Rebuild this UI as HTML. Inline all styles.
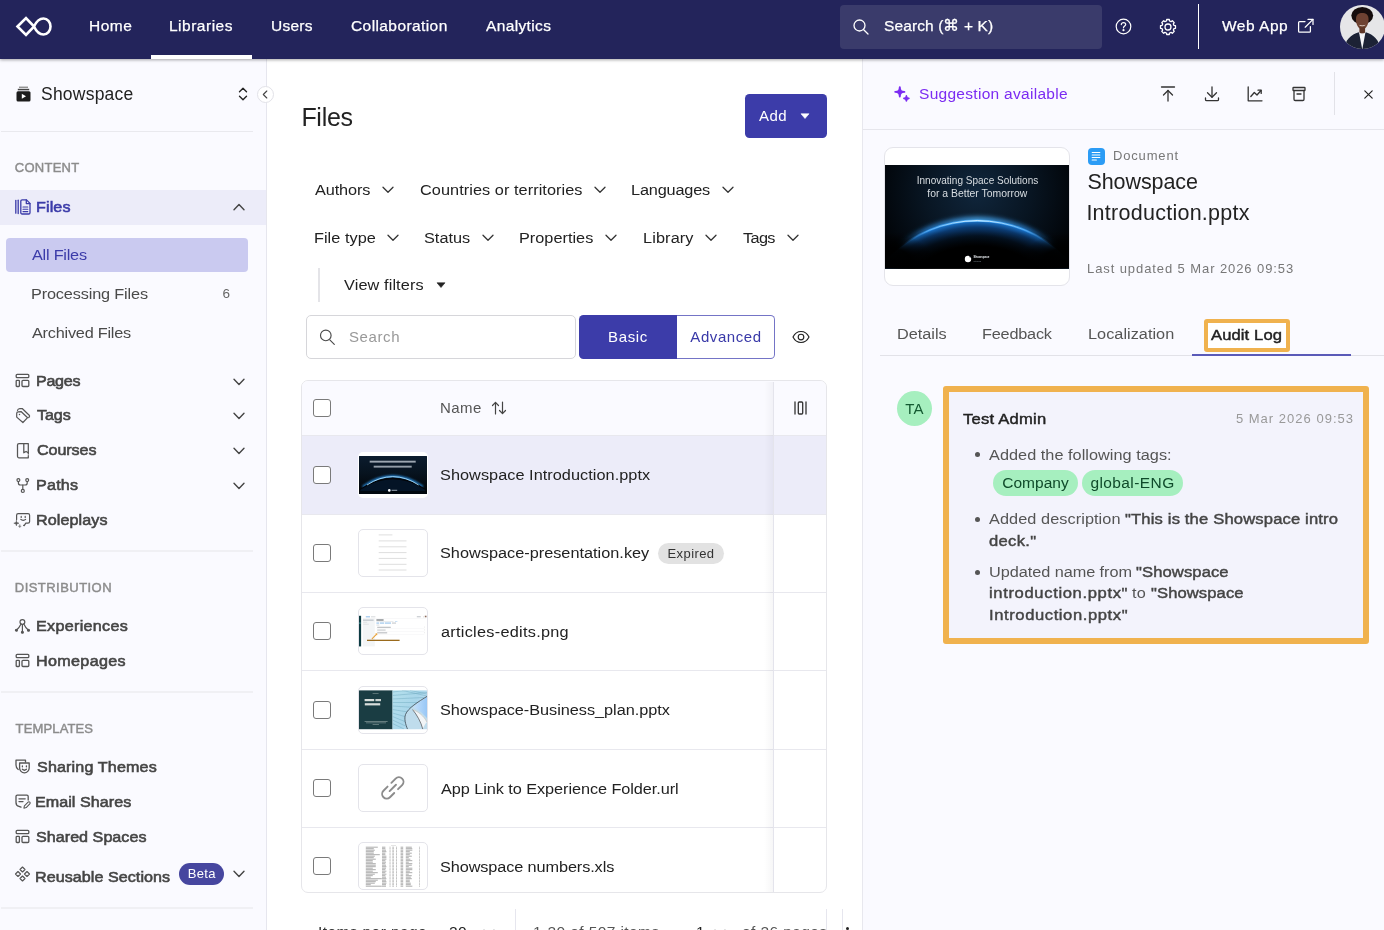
<!DOCTYPE html>
<html lang="en"><head><meta charset="utf-8"><title>Files</title>
<style>
*{box-sizing:border-box;margin:0;padding:0}
html,body{width:1384px;height:930px;overflow:hidden;background:#fff}
body{font-family:"Liberation Sans",sans-serif;color:#222;position:relative;font-size:15px}
.abs{position:absolute}
.t{position:absolute;white-space:nowrap;line-height:20px}
svg{display:block;overflow:visible}
/* NAV */
#nav{position:absolute;left:0;top:0;width:1384px;height:59px;background:#23245b;box-shadow:0 1px 3px rgba(0,0,0,.35);z-index:10}
#nav .ni{color:#fff;font-size:15.5px;font-weight:400;top:16px;letter-spacing:.5px;-webkit-text-stroke:.25px #fff}
/* SIDEBAR */
#side{position:absolute;left:0;top:59px;width:267px;height:871px;background:#fafaff;border-right:1px solid #e6e6ee}
.hr{position:absolute;left:1px;width:252px;height:2px;background:#f0f0f4}
.sec{position:absolute;left:14px;font-size:13px;letter-spacing:.7px;color:#8c8c8c;line-height:16px;-webkit-text-stroke:.45px #8c8c8c}
.mi{position:absolute;left:36px;transform:scaleX(1.04);transform-origin:0 0;font-size:15.5px;font-weight:400;-webkit-text-stroke:.6px #454545;color:#454545;line-height:20px;letter-spacing:.2px;white-space:nowrap}
.sub{position:absolute;transform:scaleX(1.05);transform-origin:0 0;left:32px;font-size:15.5px;color:#4a4a4a;line-height:20px;letter-spacing:.45px;white-space:nowrap}
.ico{position:absolute;left:14px;width:17px;height:17px;fill:none;stroke:#555;stroke-width:1.3;stroke-linecap:round;stroke-linejoin:round}
.chev{position:absolute;left:233px;width:12px;height:8px;fill:none;stroke:#444;stroke-width:1.4;stroke-linecap:round;stroke-linejoin:round}
/* MAIN */
#main{position:absolute;left:267px;top:59px;width:595px;height:871px;background:#fff}
.flt{position:absolute;transform:scaleX(1.05);transform-origin:0 0;font-size:15.5px;color:#222;line-height:20px;letter-spacing:.4px;white-space:nowrap}
.fch{position:absolute;width:12px;height:8px;fill:none;stroke:#333;stroke-width:1.3;stroke-linecap:round;stroke-linejoin:round}
.cb{position:absolute;left:313px;width:18px;height:18px;border:1.5px solid #7a7a7a;border-radius:3px;background:#fff}
.thumb{position:absolute;left:358.3px;width:69.6px;height:48px;border:1px solid #e4e4ea;border-radius:5px;background:#fff;overflow:hidden}
.fn{position:absolute;transform:scaleX(1.05);transform-origin:0 0;left:441px;font-size:15.5px;color:#222;line-height:20px;letter-spacing:.45px;white-space:nowrap}
.rowline{position:absolute;left:302px;width:524px;height:1px;background:#e8e8ee}
/* PANEL */
#panel{position:absolute;left:862px;top:59px;width:522px;height:871px;background:#fafaff;border-left:1px solid #e8e8ee}
.pic{position:absolute;width:18px;height:18px;fill:none;stroke:#333;stroke-width:1.3;stroke-linecap:round;stroke-linejoin:round}
.tab{position:absolute;transform:scaleX(1.05);transform-origin:0 0;top:324px;font-size:15.5px;color:#555;line-height:20px;letter-spacing:.5px;white-space:nowrap}
.li{position:absolute;left:989px;font-size:15.5px;color:#555;line-height:21.5px;letter-spacing:.35px;white-space:nowrap}
.li b{color:#444;letter-spacing:.1px}
.lr{position:absolute;transform:scaleX(1.05);transform-origin:0 0;font-size:15.5px;color:#555;line-height:20px;white-space:nowrap}
.lb{position:absolute;transform:scaleX(1.07);transform-origin:0 0;font-size:15.5px;font-weight:400;-webkit-text-stroke:.45px #444;color:#444;line-height:20px;white-space:nowrap}
.dot{position:absolute;left:975px;width:5px;height:5px;border-radius:50%;background:#555}
.tag{position:absolute;top:469.5px;height:26px;border-radius:13px;background:#a6efbf;color:#0f4a2a;font-size:15.5px;line-height:26px;text-align:center;letter-spacing:.3px}
#root{position:absolute;left:0;top:0;width:1384px;height:930px;overflow:hidden;will-change:transform;background:#fff}
</style></head><body>
<div id="root">

<!-- ================= NAV ================= -->
<div id="nav">
  <svg class="abs" style="left:16px;top:15px" width="36" height="23" viewBox="0 0 36 23"><path d="M1.5 11.5 L10 3 L18 11.5 C21 5 25 3.5 27.5 3.5 C31.5 3.5 34.5 7 34.5 11.5 C34.5 16 31.5 19.5 27.5 19.5 C25 19.5 21 18 18 11.5 L10 20 Z" fill="none" stroke="#fff" stroke-width="2.6" stroke-linejoin="miter"/></svg>
  <div class="t ni" style="left:89.0px;letter-spacing:0.5px">Home</div>
  <div class="t ni" style="left:169.0px;letter-spacing:0.5px">Libraries</div>
  <div class="t ni" style="left:271.0px;letter-spacing:0.25px">Users</div>
  <div class="t ni" style="left:351px;letter-spacing:0.41px">Collaboration</div>
  <div class="t ni" style="left:486.0px;letter-spacing:0.37px">Analytics</div>
  <div class="abs" style="left:151px;top:55px;width:101px;height:4px;background:#fff"></div>
  <div class="abs" style="left:840px;top:5px;width:262px;height:43.6px;background:#3a3b6b;border-radius:4px"></div>
  <svg class="abs" style="left:852px;top:18px" width="18" height="18" viewBox="0 0 18 18" fill="none" stroke="#fff" stroke-width="1.3" stroke-linecap="round"><circle cx="7.5" cy="7.5" r="5.5"/><path d="M11.7 11.7 L16 16"/></svg>
  <div class="t ni" style="left:884px;letter-spacing:0.11px">Search (⌘ + K)</div>
  <svg class="abs" style="left:1115px;top:18px" width="17" height="17" viewBox="0 0 17 17" fill="none" stroke="#fff" stroke-width="1.2" stroke-linecap="round"><circle cx="8.5" cy="8.5" r="7.3"/><path d="M6.3 6.6 C6.3 5.3 7.3 4.6 8.5 4.6 C9.8 4.6 10.7 5.4 10.7 6.5 C10.7 8 8.5 8.1 8.5 9.8"/><circle cx="8.5" cy="12.2" r=".5" fill="#fff"/></svg>
  <svg class="abs" style="left:1158.6px;top:17.6px" width="18" height="18" viewBox="0 0 18 18" fill="none" stroke="#fff" stroke-width="1.3" stroke-linejoin="round"><path d="M7.41 3.01 L7.69 1.51 L10.31 1.51 L10.59 3.01 L12.11 3.64 L13.37 2.78 L15.22 4.63 L14.36 5.89 L14.99 7.41 L16.49 7.69 L16.49 10.31 L14.99 10.59 L14.36 12.11 L15.22 13.37 L13.37 15.22 L12.11 14.36 L10.59 14.99 L10.31 16.49 L7.69 16.49 L7.41 14.99 L5.89 14.36 L4.63 15.22 L2.78 13.37 L3.64 12.11 L3.01 10.59 L1.51 10.31 L1.51 7.69 L3.01 7.41 L3.64 5.89 L2.78 4.63 L4.63 2.78 L5.89 3.64 Z"/><circle cx="9" cy="9" r="3"/></svg>
  <div class="abs" style="left:1197.7px;top:4px;width:1.6px;height:45px;background:#fff"></div>
  <div class="t ni" style="left:1222.0px;letter-spacing:0.5px">Web App</div>
  <svg class="abs" style="left:1297px;top:18px" width="17" height="16" viewBox="1297 18 17 16" fill="none" stroke="#fff" stroke-width="1.25" stroke-linecap="round" stroke-linejoin="round"><path d="M1305 21.6 H1299.6 a1 1 0 0 0 -1 1 V31.2 a1 1 0 0 0 1 1 H1309.4 a1 1 0 0 0 1 -1 V26.6"/><path d="M1308 19.4 H1313 V24.4"/><path d="M1313 19.4 L1305.2 27.2"/></svg>
  <div class="abs" id="avatar" style="left:1340px;top:4.5px;width:44.5px;height:44.5px;border-radius:50%;background:#e6e6e8;overflow:hidden">
    <svg width="44.5" height="44.5" viewBox="0 0 44 44"><defs><filter id="avb"><feGaussianBlur stdDeviation=".5"/></filter></defs><g filter="url(#avb)"><ellipse cx="22" cy="10.5" rx="10.8" ry="8.6" fill="#17100e"/><path d="M15.8 14 C15.8 9.5 18.5 8 22 8 C25.5 8 28.2 9.5 28.2 14 C28.2 19.5 25.8 23.8 22 23.8 C18.2 23.8 15.8 19.5 15.8 14 Z" fill="#6e4230"/><path d="M18.4 19.6 Q22 22.6 25.6 19.6 Q22 21 18.4 19.6Z" fill="#f2e8e4"/><rect x="19.2" y="22" width="5.6" height="6" fill="#5d3626"/><path d="M4 46 C4.5 34 11 29.5 18.5 27 L22 31 L25.5 27 C33 29.5 39.5 34 40 46 Z" fill="#1a2236"/><path d="M18.8 27 L22 44 L25.2 27 L22 29.4 Z" fill="#f4f5f7"/></g></svg>
  </div>
</div>

<!-- ================= SIDEBAR ================= -->
<div id="side"></div>
<div id="sidec" class="abs" style="left:0;top:0;width:267px;height:930px">
  <!-- library switcher -->
  <svg class="abs" style="left:16px;top:85.6px" width="15" height="16" viewBox="0 0 15 16"><rect x="3" y="0.6" width="9" height="1.3" fill="#888"/><rect x="1.8" y="2.8" width="11.4" height="1.5" fill="#444"/><rect x="0.5" y="5.2" width="14" height="10.3" rx="1.5" fill="#1c1c1c"/><path d="M5.8 7.8 L10 10.3 L5.8 12.8 Z" fill="#fff"/></svg>
  <div class="t sw" style="left:41.0px;top:83px;font-size:17.5px;line-height:22px;color:#222;letter-spacing:0.22px">Showspace</div>
  <svg class="abs" style="left:238px;top:87px" width="10" height="14" viewBox="0 0 10 14" fill="none" stroke="#222" stroke-width="1.4" stroke-linecap="round" stroke-linejoin="round"><path d="M1.5 4.8 L5 1.3 L8.5 4.8"/><path d="M1.5 9.2 L5 12.7 L8.5 9.2"/></svg>
  <div class="hr" style="top:131px;height:1px;background:#e9e9ee"></div>
  <div class="sec" style="top:160px;letter-spacing:0.26px;left:14.8px">CONTENT</div>
  <!-- Files active -->
  <div class="abs" style="left:0;top:189.5px;width:266px;height:35px;background:#ececf9"></div>
  <svg class="abs" style="left:15px;top:199px" width="16" height="16" viewBox="0 0 16 16" fill="none" stroke="#3b3ba9" stroke-width="1.3" stroke-linecap="round" stroke-linejoin="round"><path d="M0.8 1.5 V14.2"/><path d="M3.2 1.2 V14.5"/><path d="M5.8 2.2 a1.3 1.3 0 0 1 1.3 -1.3 H11.5 L15 4.4 V13.7 a1.3 1.3 0 0 1 -1.3 1.3 H7.1 a1.3 1.3 0 0 1 -1.3 -1.3 Z"/><path d="M11.3 1 V4.6 H15"/><path d="M8 8 H12.8 M8 10.3 H12.8 M8 12.6 H12.8" stroke-width="1.1"/></svg>
  <div class="mi" style="top:197px;color:#3b3ba9;-webkit-text-stroke-color:#3b3ba9;letter-spacing:0.1px;left:36.0px">Files</div>
  <svg class="chev" style="top:203px" viewBox="0 0 12 8"><path d="M1 6.8 L6 1.5 L11 6.8"/></svg>
  <div class="abs" style="left:6px;top:238px;width:242px;height:34px;background:#cacaf0;border-radius:4px"></div>
  <div class="sub" style="top:245px;color:#3b3ba9;letter-spacing:-0.23px">All Files</div>
  <div class="sub" style="top:284px;letter-spacing:-0.15px;left:31.2px">Processing Files</div>
  <div class="t" style="left:222.6px;top:285px;font-size:13.5px;color:#666;line-height:18px">6</div>
  <div class="sub" style="top:323px;letter-spacing:-0.22px">Archived Files</div>

  <svg class="ico" style="top:372px" viewBox="0 0 17 17"><rect x="2.2" y="2.3" width="12.6" height="3.4" rx="1"/><rect x="2.2" y="8.3" width="3.2" height="6.2" rx=".8"/><rect x="8" y="8.3" width="6.8" height="6.2" rx="1"/></svg>
  <div class="mi" style="top:371px;letter-spacing:-0.3px;left:36.0px">Pages</div>
  <svg class="chev" style="top:378px" viewBox="0 0 12 8"><path d="M1 1.2 L6 6.5 L11 1.2"/></svg>

  <svg class="ico" style="top:406px;stroke-width:1.2" viewBox="0 0 17 17"><path d="M4.1 5.9 L7.3 5.7 L13.6 11.7 L8.9 16.5 L2.7 11.1 L2.7 7.4 Q2.7 6 4.1 5.9 Z"/><path d="M3.5 4.4 Q3.9 2.7 5.8 2.6 L8.2 2.5 L15.2 9.2 Q16 10.1 15.2 11 L14.7 11.5"/><circle cx="5.5" cy="8.6" r=".75" fill="#555" stroke="none"/></svg>
  <div class="mi" style="top:405px;letter-spacing:-0.1px;left:37.0px">Tags</div>
  <svg class="chev" style="top:412px" viewBox="0 0 12 8"><path d="M1 1.2 L6 6.5 L11 1.2"/></svg>

  <svg class="ico" style="top:441px;stroke-width:1.25" viewBox="0 0 17 17"><path d="M14.3 13 V2.6 H5 a1.5 1.5 0 0 0 -1.5 1.5 V15.3 a1.5 1.5 0 0 0 1.5 1.5 H14.3 V14.7"/><path d="M9.8 2.6 V11.8 L12.05 10.5 L14.3 11.8"/></svg>
  <div class="mi" style="top:440px;letter-spacing:-0.09px;left:37.0px">Courses</div>
  <svg class="chev" style="top:447px" viewBox="0 0 12 8"><path d="M1 1.2 L6 6.5 L11 1.2"/></svg>

  <svg class="ico" style="top:476px;stroke-width:1.2" viewBox="0 0 17 17"><circle cx="4.4" cy="4.1" r="1.45"/><circle cx="13.2" cy="4.1" r="1.45"/><circle cx="8.8" cy="14.9" r="1.5"/><path d="M4.4 5.6 V7 a2 2 0 0 0 2 2 H11.2 a2 2 0 0 0 2 -2 V5.6"/><path d="M8.8 9 V13.4"/></svg>
  <div class="mi" style="top:475px;letter-spacing:0.2px;left:36.0px">Paths</div>
  <svg class="chev" style="top:482px" viewBox="0 0 12 8"><path d="M1 1.2 L6 6.5 L11 1.2"/></svg>

  <svg class="ico" style="top:511px;stroke-width:1.2" viewBox="0 0 17 17"><path d="M2.6 8.6 V4.2 a1.6 1.6 0 0 1 1.6 -1.6 H14 a1.6 1.6 0 0 1 1.6 1.6 V10.6 a1.6 1.6 0 0 1 -1.6 1.6 H11.8 L10.2 14.6 L9.6 14.4"/><path d="M7.2 5.4 V6.4 M11.2 5.4 V6.4"/><path d="M6.8 8.4 a3 2.4 0 0 0 4.8 0"/><path d="M2.4 9.6 C2.6 11.4 3.2 12 5 12.2 C3.2 12.4 2.6 13 2.4 14.8 C2.2 13 1.6 12.4 -.2 12.2 C1.6 12 2.2 11.4 2.4 9.6 Z" fill="#555" stroke-width=".5"/><path d="M5.8 13.9 C5.9 14.9 6.2 15.2 7.2 15.3 C6.2 15.4 5.9 15.7 5.8 16.7 C5.7 15.7 5.4 15.4 4.4 15.3 C5.4 15.2 5.7 14.9 5.8 13.9 Z" fill="#555" stroke-width=".4"/></svg>
  <div class="mi" style="top:510px;letter-spacing:0.09px;left:36.0px">Roleplays</div>

  <div class="hr" style="top:550px"></div>
  <div class="sec" style="top:580px;letter-spacing:0.46px;left:14.8px">DISTRIBUTION</div>

  <svg class="ico" style="top:617px;stroke-width:1.2" viewBox="0 0 17 17"><circle cx="8.4" cy="5" r="2.4"/><path d="M7 7 C5.8 9.6 4.6 11.4 2.6 12.9"/><path d="M9.8 7 C11 9.6 12.2 11.4 14.2 12.9"/><path d="M8.4 7.5 V14.6"/><circle cx="2.4" cy="13.2" r=".95" fill="#555"/><circle cx="14.5" cy="13.2" r=".95" fill="#555"/><circle cx="8.4" cy="15.3" r=".95" fill="#555"/></svg>
  <div class="mi" style="top:616px;letter-spacing:0.3px;left:36.0px">Experiences</div>
  <svg class="ico" style="top:652px" viewBox="0 0 17 17"><rect x="2.2" y="2.3" width="12.6" height="3.4" rx="1"/><rect x="2.2" y="8.3" width="3.2" height="6.2" rx=".8"/><rect x="8" y="8.3" width="6.8" height="6.2" rx="1"/></svg>
  <div class="mi" style="top:651px;letter-spacing:0.33px;left:36.0px">Homepages</div>

  <div class="hr" style="top:691px"></div>
  <div class="sec" style="top:721px;letter-spacing:0.14px;left:15.6px">TEMPLATES</div>

  <svg class="ico" style="top:758px" viewBox="0 0 17 17"><path d="M4.2 11.5 C2.8 10.6 2 9 2 7 V2.2 H11.5 V4"/><path d="M5.6 5 H15.2 V10 a4.8 4.8 0 0 1 -9.6 0 Z"/><path d="M8.4 8 V8.8 M12.4 8 V8.8"/><path d="M8.4 11.3 a2.6 2 0 0 0 4 0"/></svg>
  <div class="mi" style="top:757px;letter-spacing:0.13px;left:37.0px">Sharing Themes</div>
  <svg class="ico" style="top:793px" viewBox="0 0 17 17"><path d="M14.2 7 V3.5 a1.3 1.3 0 0 0 -1.3 -1.3 H3.3 a1.3 1.3 0 0 0 -1.3 1.3 V9.5 a4 4 0 0 0 3 3.9 L7 14.2"/><path d="M5 5.8 H11.2 M5 8.6 H9"/><path d="M9.9 15.2 L10.4 12.8 L14.1 9.1 a1.15 1.15 0 0 1 1.7 1.7 L12.2 14.6 Z" fill="none" stroke-width="1.05"/></svg>
  <div class="mi" style="top:792px;letter-spacing:0.03px;left:35.0px">Email Shares</div>
  <svg class="ico" style="top:828px" viewBox="0 0 17 17"><rect x="2.2" y="2.3" width="12.6" height="3.4" rx="1"/><rect x="2.2" y="8.3" width="3.2" height="6.2" rx=".8"/><rect x="8" y="8.3" width="6.8" height="6.2" rx="1"/></svg>
  <div class="mi" style="top:827px;letter-spacing:0.02px;left:36.0px">Shared Spaces</div>
  <svg class="ico" style="top:866px;stroke-width:1.15" viewBox="0 0 17 17"><path d="M8.5 1 L11 3.5 L8.5 6 L6 3.5 Z"/><path d="M8.5 10 L11 12.5 L8.5 15 L6 12.5 Z"/><path d="M4 5.5 L6.5 8 L4 10.5 L1.5 8 Z"/><path d="M13 5.5 L15.5 8 L13 10.5 L10.5 8 Z"/></svg>
  <div class="mi" style="top:867px;letter-spacing:0.04px;left:35.0px">Reusable Sections</div>
  <div class="abs" style="left:179px;top:863px;width:45.4px;height:22px;border-radius:11px;background:#46469f;color:#fff;font-size:13px;line-height:22px;text-align:center;letter-spacing:.3px">Beta</div>
  <svg class="chev" style="top:870px" viewBox="0 0 12 8"><path d="M1 1.2 L6 6.5 L11 1.2"/></svg>
  <div class="hr" style="top:907px"></div>
</div>
<!-- collapse handle -->
<div class="abs" style="left:257px;top:86px;width:17px;height:17px;border-radius:50%;background:#fff;border:1px solid #e2e2e8;z-index:5"></div>
<svg class="abs" style="left:262px;top:90px;z-index:6" width="6" height="9" viewBox="0 0 6 9" fill="none" stroke="#444" stroke-width="1.1" stroke-linecap="round" stroke-linejoin="round"><path d="M4.8 1 L1.3 4.5 L4.8 8"/></svg>

<!-- ================= MAIN ================= -->
<div id="main"></div>
<div id="mainc" class="abs" style="left:0;top:0;width:862px;height:930px;overflow:hidden">
  <div class="t ttl" style="left:301.4px;top:101px;font-size:25px;line-height:32px;color:#222;letter-spacing:-0.29px">Files</div>
  <div class="abs" style="left:745px;top:94.4px;width:82px;height:43.2px;background:#3c3ca9;border-radius:4.5px"></div>
  <div class="t add" style="left:759px;top:106px;color:#fff;font-size:15px;letter-spacing:0.5px">Add</div>
  <svg class="abs" style="left:800px;top:113px" width="10" height="6" viewBox="0 0 10 6"><path d="M1 .8 H9 L5 5.5 Z" fill="#fff" stroke="#fff" stroke-width=".6" stroke-linejoin="round"/></svg>
  <div class="flt" style="left:315px;top:180px;letter-spacing:-0.1px">Authors</div><svg class="fch" style="left:382px;top:186px" viewBox="0 0 12 8"><path d="M1 1.3 L6 6.3 L11 1.3"/></svg>
  <div class="flt" style="left:420px;top:180px;letter-spacing:0.06px">Countries or territories</div><svg class="fch" style="left:594px;top:186px" viewBox="0 0 12 8"><path d="M1 1.3 L6 6.3 L11 1.3"/></svg>
  <div class="flt" style="left:631.3px;top:180px;letter-spacing:-0.16px">Languages</div><svg class="fch" style="left:722px;top:186px" viewBox="0 0 12 8"><path d="M1 1.3 L6 6.3 L11 1.3"/></svg>
  <div class="flt" style="left:314.0px;top:228px;letter-spacing:0.03px">File type</div><svg class="fch" style="left:387px;top:234px" viewBox="0 0 12 8"><path d="M1 1.3 L6 6.3 L11 1.3"/></svg>
  <div class="flt" style="left:424.0px;top:228px;letter-spacing:-0.0px">Status</div><svg class="fch" style="left:482px;top:234px" viewBox="0 0 12 8"><path d="M1 1.3 L6 6.3 L11 1.3"/></svg>
  <div class="flt" style="left:519.0px;top:228px;letter-spacing:0.01px">Properties</div><svg class="fch" style="left:605px;top:234px" viewBox="0 0 12 8"><path d="M1 1.3 L6 6.3 L11 1.3"/></svg>
  <div class="flt" style="left:643.0px;top:228px;letter-spacing:0.12px">Library</div><svg class="fch" style="left:705px;top:234px" viewBox="0 0 12 8"><path d="M1 1.3 L6 6.3 L11 1.3"/></svg>
  <div class="flt" style="left:743px;top:228px;letter-spacing:-0.6px">Tags</div><svg class="fch" style="left:787px;top:234px" viewBox="0 0 12 8"><path d="M1 1.3 L6 6.3 L11 1.3"/></svg>
  <div class="abs" style="left:318px;top:268px;width:2px;height:34px;background:#e4e4e8"></div>
  <div class="flt" style="left:344.0px;top:275px;letter-spacing:0.1px">View filters</div>
  <svg class="abs" style="left:436px;top:282px" width="10" height="6" viewBox="0 0 10 6"><path d="M1 .8 H9 L5 5.5 Z" fill="#222" stroke="#222" stroke-width=".6" stroke-linejoin="round"/></svg>
  <!-- search -->
  <div class="abs" style="left:305.5px;top:315px;width:270px;height:44px;border:1px solid #d6d6da;border-radius:5px;background:#fff"></div>
  <svg class="abs" style="left:319px;top:329px" width="17" height="17" viewBox="0 0 17 17" fill="none" stroke="#4a4a4a" stroke-width="1.15" stroke-linecap="round"><circle cx="6.8" cy="6.4" r="5.3"/><path d="M10.8 10.8 L15.3 15.3"/></svg>
  <div class="t ph" style="left:349.0px;top:327px;color:#999;font-size:15px;letter-spacing:0.6px">Search</div>
  <div class="abs" style="left:579px;top:315.2px;width:98px;height:43.4px;background:#3c3ca9;border-radius:4.5px 0 0 4.5px"></div>
  <div class="t bas" style="left:579px;top:327px;width:98px;text-align:center;color:#fff;font-size:15px;letter-spacing:0.65px">Basic</div>
  <div class="abs" style="left:677px;top:315.2px;width:98.4px;height:43.4px;background:#fff;border:1px solid #7474c6;border-left:none;border-radius:0 4.5px 4.5px 0"></div>
  <div class="t adv" style="left:677px;top:327px;width:98px;text-align:center;color:#3939a8;font-size:15px;letter-spacing:0.58px">Advanced</div>
  <svg class="abs" style="left:792px;top:330px" width="18" height="14" viewBox="0 0 18 14" fill="none" stroke="#222" stroke-width="1.15"><path d="M1 7 C3 3 6 1.5 9 1.5 C12 1.5 15 3 17 7 C15 11 12 12.5 9 12.5 C6 12.5 3 11 1 7 Z"/><circle cx="9" cy="7" r="2.8"/></svg>
  <!-- table -->
  <div class="abs" style="left:301px;top:380px;width:526px;height:513px;border:1px solid #e6e6ea;border-radius:7px;background:#fff;overflow:hidden">
    <div class="abs" style="left:0;top:0;width:526px;height:54px;background:#fafaff"></div>
    <div class="abs" style="left:0;top:54px;width:526px;height:1px;background:#e8e8ee"></div>
    <div class="abs" style="left:0;top:55px;width:526px;height:78px;background:#ececf9"></div>
  </div>
  <div class="cb" style="top:399px"></div>
  <div class="t nm" style="left:440.0px;top:398px;font-size:15px;color:#555;letter-spacing:0.43px">Name</div>
  <svg class="abs" style="left:491px;top:401px" width="16" height="14" viewBox="0 0 16 14" fill="none" stroke="#444" stroke-width="1.2" stroke-linecap="round" stroke-linejoin="round"><path d="M4.5 13 V1.5 M1.5 4.5 L4.5 1.3 L7.5 4.5"/><path d="M11.5 1 V12.5 M8.5 9.5 L11.5 12.7 L14.5 9.5"/></svg>
  <div class="cb" style="top:466.2px"></div><div class="thumb" style="top:452px;height:46px;border-color:transparent"><svg class="abs" style="left:-1px;top:-1px" width="70" height="46" viewBox="0 0 70 46"><defs><linearGradient id="t1a" x1="0" y1="0" x2="0" y2="1"><stop offset="0" stop-color="#0b1c2e"/><stop offset=".45" stop-color="#07131f"/><stop offset="1" stop-color="#010305"/></linearGradient><radialGradient id="t1b" cx="35" cy="36" r="30" gradientUnits="userSpaceOnUse" gradientTransform="translate(0 18) scale(1 .5)"><stop offset="0" stop-color="#1b5f9e" stop-opacity=".9"/><stop offset="1" stop-color="#0a1a2c" stop-opacity="0"/></radialGradient><filter id="t1f" x="-10%" y="-60%" width="120%" height="220%"><feGaussianBlur stdDeviation=".9"/></filter><filter id="t1g"><feGaussianBlur stdDeviation=".45"/></filter></defs><rect x="0" y="4" width="70" height="38" fill="url(#t1a)"/><rect x="0" y="4" width="70" height="38" fill="url(#t1b)"/><path d="M5 35 Q34.8 14 64.6 35" fill="none" stroke="#2a8fe0" stroke-width="2.6" filter="url(#t1f)"/><path d="M3 36.4 Q34.8 14.8 66.6 36.4 L70 42 L0 42 Z" fill="#020509"/><path d="M3 37.4 Q34.8 17 66.6 37.4 L70 42 L0 42 Z" fill="#061a30" opacity=".75"/><path d="M9 33 Q34.8 16.2 60.6 33" fill="none" stroke="#a8dcfa" stroke-width=".9" filter="url(#t1g)"/><rect x="0" y="39" width="70" height="3" fill="#000" opacity=".6"/><g filter="url(#t1g)" fill="#cdd6de"><rect x="11.7" y="8.7" width="46" height="1.9" opacity=".75"/><rect x="15.7" y="13.7" width="38" height="1.9" opacity=".7"/></g><circle cx="31.3" cy="38.4" r="1.3" fill="#fff"/><rect x="33.6" y="37.8" width="5.6" height="1" fill="#9aa4ae"/></svg></div><div class="fn" style="top:465px;letter-spacing:0.04px;left:440.0px">Showspace Introduction.pptx</div>
  <div class="cb" style="top:544.3px"></div><div class="thumb" style="top:529.3px;height:48px"><svg class="abs" style="left:-1px;top:-1px" width="70" height="48" viewBox="0 0 70 48" stroke="#dedede" stroke-width="1"><path d="M20.7 5.9 H34.4 M20.7 11.9 H48.5 M20.7 17.8 H48.5 M20.7 23.6 H48.5 M20.7 29.4 H48.5 M20.7 35.3 H48.5 M20.7 41 H48.5"/></svg></div><div class="fn" style="top:543px;letter-spacing:0.01px;left:440.0px">Showspace-presentation.key</div>
  <div class="cb" style="top:622.4px"></div><div class="thumb" style="top:607.4px;height:48px"><svg class="abs" style="left:-1px;top:-1px" width="70" height="48" viewBox="0 0 70 48"><defs><filter id="t3f"><feGaussianBlur stdDeviation=".35"/></filter></defs><g filter="url(#t3f)"><rect x=".6" y="8.8" width="2.5" height="30.6" fill="#0e3a42"/><rect x=".9" y="15.5" width="1.9" height="1.2" fill="#3f8a8a"/><rect x="4.9" y="11.4" width="11.9" height="28" fill="#f3f5f6"/><rect x="5" y="12.4" width="10.6" height="1.6" fill="#c9ced3"/><rect x="5.2" y="14.8" width="4" height=".7" fill="#d5d9dc"/><rect x="5.2" y="16.8" width="5.6" height=".7" fill="#d5d9dc"/><rect x="7.8" y="9.4" width="4.2" height=".9" fill="#7fb4e6"/><rect x="13" y="9.4" width="4.4" height=".9" fill="#cfd3d6"/><rect x="58.8" y="9.2" width="4" height="1.1" fill="#c4c8cc"/><rect x="65" y="9.4" width=".5" height="1" fill="#bbb"/><rect x="66.8" y="8.7" width="1.7" height="1.6" fill="#8a6a5a"/><rect x="4.9" y="11" width="63" height=".3" fill="#e6e8ea"/><rect x="18.4" y="12.4" width="7.2" height="1.2" fill="#6f7478"/><rect x="18.4" y="14" width="17" height=".6" fill="#dcdfe2"/><rect x="37" y="14" width="2.4" height=".6" fill="#a8cdee"/><rect x="18.4" y="15.6" width="2.6" height=".9" fill="#7fb4e6"/><rect x="21.8" y="15.6" width="4.4" height=".9" fill="#7fb4e6"/><rect x="27" y="15.6" width="6" height=".9" fill="#7fb4e6"/><rect x="34" y="15.6" width="4" height=".9" fill="#b8bcc0"/><rect x="18.4" y="17.7" width="3" height=".7" fill="#c8ccd0"/><rect x="19.2" y="19.8" width="13.6" height=".9" fill="#a9adb1"/><rect x="19.2" y="22.6" width="8.4" height=".9" fill="#b9bdc1"/><rect x="19.2" y="25.4" width="10" height=".9" fill="#a9adb1"/><rect x="18.4" y="21.4" width="48" height=".25" fill="#e4e6e8"/><rect x="18.4" y="24.2" width="48" height=".25" fill="#e4e6e8"/><rect x="18.4" y="27" width="48" height=".25" fill="#e4e6e8"/><rect x="66" y="19.6" width=".4" height="1" fill="#ccc"/><rect x="66" y="22.4" width=".4" height="1" fill="#ccc"/><rect x="66" y="25.2" width=".4" height="1" fill="#ccc"/><path d="M14.2 31.6 L18.6 27.2" stroke="#e8a23a" stroke-width="1.1" stroke-linecap="round"/><path d="M17.2 26.6 L19.4 26.4 L19 28.6 Z" fill="#e8a23a"/><rect x="9" y="32.7" width="32.6" height="1.3" fill="#9a6b1f"/></g></svg></div><div class="fn" style="top:622px;letter-spacing:0.26px">articles-edits.png</div>
  <div class="cb" style="top:700.6px"></div><div class="thumb" style="top:685.6px;height:48px"><svg class="abs" style="left:-1px;top:-1px" width="70" height="48" viewBox="0 0 70 48"><defs><linearGradient id="t4a" x1="0" y1="0" x2="1" y2=".6"><stop offset="0" stop-color="#b4e0ec"/><stop offset=".6" stop-color="#a9d6ea"/><stop offset="1" stop-color="#c6e0f4"/></linearGradient><linearGradient id="t4b" x1="0" y1="0" x2="1" y2="0"><stop offset="0" stop-color="#c4e0fa"/><stop offset="1" stop-color="#96c6f6"/></linearGradient><filter id="t4f"><feGaussianBlur stdDeviation=".3"/></filter><clipPath id="t4c"><rect x="34.5" y="4.4" width="35.1" height="38.8"/></clipPath></defs><rect x=".4" y="4.4" width="34.2" height="38.8" fill="#1a3d43"/><rect x="34.5" y="4.4" width="35.1" height="38.8" fill="url(#t4a)"/><g clip-path="url(#t4c)" filter="url(#t4f)"><path d="M34.5 6 L69 2 M34.5 9.5 L69 6.5 M34.5 13 L66 11.5 M34.5 16.5 L62 16.5 M34.5 20 L57 21.5 M34.5 23.5 L53 26.5 M34.5 27 L50 31.5 M34.5 30.5 L48 36 M34.5 34 L47.5 40 M34.5 37.5 L46 43 M44 4.4 L69 10 M52 4.4 L69 8" stroke="#5f9db4" stroke-width=".45" opacity=".8"/><path d="M69.6 10 C60 16 50 22 47.5 28.5 C46 33 47.5 38 49.5 43.2 L69.6 43.2 Z" fill="#bfdcec"/><path d="M69.6 10.5 C63 15 58 18 55.5 21.5 C59 23 65 27 69.6 33 Z" fill="url(#t4b)"/><path d="M69.6 10 C60 16 50 22 47.5 28.5 C46 33 47.5 38 49.5 43.2" fill="none" stroke="#3a4650" stroke-width=".8"/><path d="M54.6 23.6 C60 25.5 66 30 68.8 36 C66.5 39 65.5 41 64.8 43.2 C63 36 59 29 54.6 23.6 Z" fill="#f2f5f7"/><path d="M54.6 23.6 C59 29 63 36 64.8 43.2" fill="none" stroke="#4a4a4e" stroke-width=".7"/><path d="M55 23.8 C60 25.5 66 30 68.8 36" fill="none" stroke="#c9b8a8" stroke-width=".5"/></g><g filter="url(#t4f)" fill="#e8ece8"><rect x="14.6" y="7.4" width="6" height=".5" opacity=".6"/><rect x="6.6" y="13" width="9.6" height="2.2" opacity=".92"/><rect x="17.4" y="13" width="5.6" height="2.2" opacity=".85"/><rect x="6.8" y="17.2" width="15.4" height="2.2" opacity=".92"/><rect x="6.6" y="35.4" width="23" height=".6" opacity=".6"/><rect x="8" y="36.6" width="20" height=".6" opacity=".55"/><rect x="14.6" y="38.2" width="6.4" height=".6" opacity=".55"/></g></svg></div><div class="fn" style="top:700px;letter-spacing:-0.03px;left:440.0px">Showspace-Business_plan.pptx</div>
  <div class="cb" style="top:778.9px"></div><div class="thumb" style="top:763.9px;height:48px"><svg class="abs" style="left:-1px;top:-1px" width="70" height="48" viewBox="0 0 70 48"><g transform="translate(34.8 23.9) rotate(-45)" fill="none" stroke="#8c8c8c" stroke-width="1.9" stroke-linecap="round"><path d="M2.6 -4.6 H8.6 A4.6 4.6 0 0 1 8.6 4.6 H2.8"/><path d="M-2.6 4.6 H-8.6 A4.6 4.6 0 0 1 -8.6 -4.6 H-2.8"/><path d="M-4.5 0 H4.5"/></g></svg></div><div class="fn" style="top:779px;letter-spacing:-0.06px">App Link to Experience Folder.url</div>
  <div class="cb" style="top:857.1px"></div><div class="thumb" style="top:842.1px;height:48px"><svg class="abs" style="left:-1px;top:-1px" width="70" height="48" viewBox="0 0 70 48"><defs><filter id="t6f"><feGaussianBlur stdDeviation=".35"/></filter></defs><g filter="url(#t6f)"><path d="M7.8 5.20 h12 M24 5.20 h3.4 M31.6 5.20 h.9 M34.4 5.20 h1.4 M38 5.20 h.9 M42.6 5.20 h2.6 M47.8 5.20 h6 M61 5.20 h.8 M7.8 6.70 h8 M24 6.70 h3.4 M31.6 6.70 h.9 M34.4 6.70 h1.4 M38 6.70 h.9 M42.6 6.70 h2.6 M47.8 6.70 h6.5 M61 6.70 h.8 M7.8 8.20 h9 M24 8.20 h4 M31.6 8.20 h.9 M34.4 8.20 h1.4 M38 8.20 h.9 M42.6 8.20 h2.6 M47.8 8.20 h6.5 M61 8.20 h.8 M7.8 9.70 h8 M24 9.70 h4.4 M31.6 9.70 h.9 M34.4 9.70 h1.4 M38 9.70 h.9 M42.6 9.70 h2.6 M47.8 9.70 h4 M61 9.70 h.8 M7.8 11.20 h8 M24 11.20 h3.4 M31.6 11.20 h.9 M34.4 11.20 h1.4 M38 11.20 h.9 M42.6 11.20 h2.6 M47.8 11.20 h6 M61 11.20 h.8 M7.8 12.70 h14 M24 12.70 h3.4 M31.6 12.70 h.9 M34.4 12.70 h1.4 M38 12.70 h.9 M42.6 12.70 h2.6 M47.8 12.70 h4 M61 12.70 h.8 M7.8 14.20 h9 M24 14.20 h4.4 M31.6 14.20 h.9 M34.4 14.20 h1.4 M38 14.20 h.9 M42.6 14.20 h2.6 M47.8 14.20 h6 M61 14.20 h.8 M7.8 15.70 h8 M24 15.70 h4.4 M31.6 15.70 h.9 M34.4 15.70 h1.4 M38 15.70 h.9 M42.6 15.70 h2.6 M47.8 15.70 h3 M61 15.70 h.8 M7.8 17.20 h10 M24 17.20 h4.4 M31.6 17.20 h.9 M34.4 17.20 h1.4 M38 17.20 h.9 M42.6 17.20 h2.6 M47.8 17.20 h4.5 M61 17.20 h.8 M7.8 18.70 h7 M24 18.70 h3.4 M31.6 18.70 h.9 M34.4 18.70 h1.4 M38 18.70 h.9 M42.6 18.70 h2.6 M47.8 18.70 h6.5 M61 18.70 h.8 M7.8 20.20 h7 M24 20.20 h4 M31.6 20.20 h.9 M34.4 20.20 h1.4 M38 20.20 h.9 M42.6 20.20 h2.6 M47.8 20.20 h3 M61 20.20 h.8 M7.8 21.70 h10 M24 21.70 h3.4 M31.6 21.70 h.9 M34.4 21.70 h1.4 M38 21.70 h.9 M42.6 21.70 h2.6 M47.8 21.70 h6.5 M61 21.70 h.8 M7.8 23.20 h10 M24 23.20 h4 M31.6 23.20 h.9 M34.4 23.20 h1.4 M38 23.20 h.9 M42.6 23.20 h2.6 M47.8 23.20 h6 M61 23.20 h.8 M7.8 24.70 h10 M24 24.70 h4.4 M31.6 24.70 h.9 M34.4 24.70 h1.4 M38 24.70 h.9 M42.6 24.70 h2.6 M47.8 24.70 h3 M61 24.70 h.8 M7.8 26.20 h7 M24 26.20 h4 M31.6 26.20 h.9 M34.4 26.20 h1.4 M38 26.20 h.9 M42.6 26.20 h2.6 M47.8 26.20 h6.5 M61 26.20 h.8 M7.8 27.70 h10 M24 27.70 h3.4 M31.6 27.70 h.9 M34.4 27.70 h1.4 M38 27.70 h.9 M42.6 27.70 h2.6 M47.8 27.70 h6.5 M61 27.70 h.8 M7.8 29.20 h7 M24 29.20 h4.4 M31.6 29.20 h.9 M34.4 29.20 h1.4 M38 29.20 h.9 M42.6 29.20 h2.6 M47.8 29.20 h4 M61 29.20 h.8 M7.8 30.70 h12 M24 30.70 h3.4 M31.6 30.70 h.9 M34.4 30.70 h1.4 M38 30.70 h.9 M42.6 30.70 h2.6 M47.8 30.70 h6.5 M61 30.70 h.8 M7.8 32.20 h9 M24 32.20 h4.4 M31.6 32.20 h.9 M34.4 32.20 h1.4 M38 32.20 h.9 M42.6 32.20 h2.6 M47.8 32.20 h3 M61 32.20 h.8 M7.8 33.70 h7 M24 33.70 h3.4 M31.6 33.70 h.9 M34.4 33.70 h1.4 M38 33.70 h.9 M42.6 33.70 h2.6 M47.8 33.70 h6 M61 33.70 h.8 M7.8 35.20 h5 M24 35.20 h4 M31.6 35.20 h.9 M34.4 35.20 h1.4 M38 35.20 h.9 M42.6 35.20 h2.6 M47.8 35.20 h5 M61 35.20 h.8 M7.8 36.70 h16 M24 36.70 h4.4 M31.6 36.70 h.9 M34.4 36.70 h1.4 M38 36.70 h.9 M42.6 36.70 h2.6 M47.8 36.70 h6 M61 36.70 h.8 M7.8 38.20 h12 M24 38.20 h4 M31.6 38.20 h.9 M34.4 38.20 h1.4 M38 38.20 h.9 M42.6 38.20 h2.6 M47.8 38.20 h4 M61 38.20 h.8 M7.8 39.70 h10 M24 39.70 h4.4 M31.6 39.70 h.9 M34.4 39.70 h1.4 M38 39.70 h.9 M42.6 39.70 h2.6 M47.8 39.70 h4 M61 39.70 h.8 M7.8 41.20 h9 M24 41.20 h4.4 M31.6 41.20 h.9 M34.4 41.20 h1.4 M38 41.20 h.9 M42.6 41.20 h2.6 M47.8 41.20 h5 M61 41.20 h.8 M7.8 42.70 h5 M24 42.70 h4 M31.6 42.70 h.9 M34.4 42.70 h1.4 M38 42.70 h.9 M42.6 42.70 h2.6 M47.8 42.70 h5 M61 42.70 h.8 M7.8 44.20 h16 M24 44.20 h4 M31.6 44.20 h.9 M34.4 44.20 h1.4 M38 44.20 h.9 M42.6 44.20 h2.6 M47.8 44.20 h6.5 M61 44.20 h.8" stroke="#6a6a6a" stroke-width=".9" opacity=".62"/><rect x="33" y="3.2" width="5" height=".4" fill="#bbb"/></g></svg></div><div class="fn" style="top:857px;letter-spacing:-0.1px;left:440.0px">Showspace numbers.xls</div>
  <div class="rowline" style="top:514px"></div>
  <div class="rowline" style="top:592px"></div>
  <div class="rowline" style="top:670px"></div>
  <div class="rowline" style="top:749px"></div>
  <div class="rowline" style="top:827px"></div>
  <div class="abs" style="left:658px;top:543px;width:66px;height:21px;border-radius:11px;background:#e2e2e2;color:#333;font-size:13px;line-height:21px;text-align:center;letter-spacing:.4px">Expired</div>
  <!-- sticky col -->
  <div class="abs" style="left:764px;top:382px;width:9px;height:510px;background:linear-gradient(90deg,rgba(0,0,30,0),rgba(0,0,30,.035))"></div>
  <div class="abs" style="left:773px;top:382px;width:1px;height:510px;background:#e4e4ec"></div>
  <svg class="abs" style="left:794px;top:401px" width="13" height="14" viewBox="0 0 13 14" fill="none" stroke="#333" stroke-width="1.3" stroke-linecap="round"><path d="M1 1 V13 M12 1 V13"/><rect x="4.3" y="1" width="4.4" height="12" rx="1"/></svg>
  <!-- mask below table + pagination -->
  <div class="abs" style="left:290px;top:894px;width:560px;height:36px;background:#fff"></div>
  <div class="abs" style="left:515px;top:909px;width:1px;height:21px;background:#e6e6ee"></div>
  <div class="abs" style="left:826px;top:909px;width:1px;height:21px;background:#e6e6ee"></div>
  <div class="abs" style="left:842px;top:909px;width:1px;height:21px;background:#e6e6ee"></div>
  <svg class="abs" style="left:483px;top:928.5px" width="12" height="8" viewBox="0 0 12 8" fill="none" stroke="#666" stroke-width="1.2" stroke-linecap="round" stroke-linejoin="round"><path d="M1 1.2 L6 6.5 L11 1.2"/></svg><svg class="abs" style="left:714px;top:928.5px" width="12" height="8" viewBox="0 0 12 8" fill="none" stroke="#666" stroke-width="1.2" stroke-linecap="round" stroke-linejoin="round"><path d="M1 1.2 L6 6.5 L11 1.2"/></svg><div class="abs" style="left:846px;top:926.6px;width:3px;height:3px;border-radius:50%;background:#222"></div>
  <div class="t" style="left:318px;top:922px;font-size:15.5px;color:#333;letter-spacing:.4px">Items per page</div>
  <div class="t" style="left:449px;top:922px;font-size:15.5px;color:#222;letter-spacing:.4px">20</div>
  <div class="t" style="left:533px;top:922px;font-size:15.5px;color:#555;letter-spacing:.4px">1-20 of 507 items</div>
  <div class="t" style="left:696px;top:922px;font-size:15.5px;color:#222;letter-spacing:.4px">1</div>
  <div class="t" style="left:742px;top:922px;font-size:15.5px;color:#555;letter-spacing:.4px">of 26 pages</div>
</div>

<!-- ================= PANEL ================= -->
<div id="panel"></div>
<div id="panelc" class="abs" style="left:0;top:0;width:1384px;height:930px">
  <div class="abs" style="left:863px;top:129px;width:521px;height:1px;background:#e6e6ec"></div>
  <svg class="abs" style="left:893px;top:85px" width="18" height="18" viewBox="893 85 18 18" fill="#7b2bf2" stroke="#7b2bf2" stroke-width="1.9" stroke-linejoin="round"><path transform="translate(899.8 91.9)" d="M0 -4.6 C.1 -1.2 1.2 -.1 4.6 0 C1.2 .1 .1 1.2 0 4.6 C-.1 1.2 -1.2 .1 -4.6 0 C-1.2 -.1 -.1 -1.2 0 -4.6 Z"/><path transform="translate(906.4 98.4)" d="M0 -2.5 C0 -.5 .5 0 2.5 0 C.5 0 0 .5 0 2.5 C0 .5 -.5 0 -2.5 0 C-.5 0 0 -.5 0 -2.5 Z" stroke-width="1.6"/></svg>
  <div class="t sug" style="left:919.0px;top:84px;color:#7b2bf2;font-size:15.5px;letter-spacing:0.29px">Suggestion available</div>
  <svg class="pic" style="left:1159px;top:85px" viewBox="0 0 18 18"><path d="M2.5 2 H15.5"/><path d="M9 16 V5.5"/><path d="M4.5 10 L9 5.5 L13.5 10"/></svg>
  <svg class="pic" style="left:1203px;top:85px" viewBox="0 0 18 18"><path d="M9 2 V12"/><path d="M4.5 7.8 L9 12.3 L13.5 7.8"/><path d="M2.5 13 V14.5 a1.2 1.2 0 0 0 1.2 1.2 H14.3 a1.2 1.2 0 0 0 1.2 -1.2 V13"/></svg>
  <svg class="pic" style="left:1246px;top:85px" viewBox="0 0 18 18"><path d="M2.2 2 V15.8 H16"/><path d="M4.8 11.5 L8.3 7.5 L11 10 L15 5.5"/><path d="M12 5.2 H15.2 V8.4"/></svg>
  <svg class="pic" style="left:1290px;top:85px" viewBox="0 0 18 18"><rect x="3" y="2.5" width="12" height="3" rx=".6"/><path d="M4 5.5 V14.3 a1.2 1.2 0 0 0 1.2 1.2 H12.8 a1.2 1.2 0 0 0 1.2 -1.2 V5.5"/><path d="M7 9 H11"/></svg>
  <div class="abs" style="left:1334px;top:72px;width:1px;height:43px;background:#e2e2e8"></div>
  <svg class="abs" style="left:1364px;top:90px" width="9" height="9" viewBox="0 0 9 9" fill="none" stroke="#222" stroke-width="1.2" stroke-linecap="round"><path d="M.8 .8 L8.2 8.2 M8.2 .8 L.8 8.2"/></svg>

  <!-- preview -->
  <div class="abs" style="left:884px;top:147px;width:186px;height:139px;border:1px solid #e4e4ea;border-radius:9px;background:#fff;overflow:hidden">
    <svg class="abs" style="left:-.3px;top:16.7px" width="184.6" height="103.7" viewBox="0 0 184.6 103.7">
      <defs>
      <radialGradient id="pv0" cx="92" cy="26" r="120" gradientUnits="userSpaceOnUse"><stop offset="0" stop-color="#10263c"/><stop offset=".45" stop-color="#081522"/><stop offset=".8" stop-color="#02060b"/><stop offset="1" stop-color="#000"/></radialGradient>
      <radialGradient id="pv1" cx="92.3" cy="181.2" r="125.4" gradientUnits="userSpaceOnUse"><stop offset="0" stop-color="#000"/><stop offset=".8" stop-color="#000"/><stop offset=".88" stop-color="#041426"/><stop offset=".95" stop-color="#0b3a70"/><stop offset="1" stop-color="#1a74cc"/></radialGradient>
      <linearGradient id="pv2" x1="12" y1="0" x2="172.6" y2="0" gradientUnits="userSpaceOnUse"><stop offset="0" stop-color="#1f7fdc" stop-opacity="0"/><stop offset=".18" stop-color="#2b8ee8" stop-opacity=".85"/><stop offset=".5" stop-color="#4fb4ff" stop-opacity="1"/><stop offset=".82" stop-color="#2b8ee8" stop-opacity=".85"/><stop offset="1" stop-color="#1f7fdc" stop-opacity="0"/></linearGradient>
      <linearGradient id="pv3" x1="20" y1="0" x2="164.6" y2="0" gradientUnits="userSpaceOnUse"><stop offset="0" stop-color="#7cc4ff" stop-opacity="0"/><stop offset=".3" stop-color="#a8dcff" stop-opacity=".8"/><stop offset=".5" stop-color="#eaf8ff" stop-opacity="1"/><stop offset=".7" stop-color="#a8dcff" stop-opacity=".8"/><stop offset="1" stop-color="#7cc4ff" stop-opacity="0"/></linearGradient>
      <linearGradient id="pv4" x1="0" y1="0" x2="184.6" y2="0" gradientUnits="userSpaceOnUse"><stop offset="0" stop-color="#000" stop-opacity=".9"/><stop offset=".22" stop-color="#000" stop-opacity="0"/><stop offset=".78" stop-color="#000" stop-opacity="0"/><stop offset="1" stop-color="#000" stop-opacity=".9"/></linearGradient>
      <linearGradient id="pv5" x1="0" y1="66" x2="0" y2="103.7" gradientUnits="userSpaceOnUse"><stop offset="0" stop-color="#000" stop-opacity="0"/><stop offset=".6" stop-color="#000" stop-opacity=".7"/><stop offset="1" stop-color="#000" stop-opacity=".9"/></linearGradient>
      <radialGradient id="pv6" cx="0" cy="100" r="52" gradientUnits="userSpaceOnUse" gradientTransform="translate(0 100) scale(1 .62) translate(0 -100)"><stop offset="0" stop-color="#000" stop-opacity="1"/><stop offset=".55" stop-color="#000" stop-opacity=".95"/><stop offset="1" stop-color="#000" stop-opacity="0"/></radialGradient><radialGradient id="pv7" cx="184.6" cy="100" r="52" gradientUnits="userSpaceOnUse" gradientTransform="translate(0 100) scale(1 .62) translate(0 -100)"><stop offset="0" stop-color="#000" stop-opacity="1"/><stop offset=".55" stop-color="#000" stop-opacity=".95"/><stop offset="1" stop-color="#000" stop-opacity="0"/></radialGradient>
      <filter id="blr" x="-10%" y="-30%" width="120%" height="160%"><feGaussianBlur stdDeviation="2.4"/></filter>
      <filter id="blr2" x="-10%" y="-30%" width="120%" height="160%"><feGaussianBlur stdDeviation=".7"/></filter>
      <clipPath id="pvc"><rect width="184.6" height="103.7"/></clipPath></defs>
      <g clip-path="url(#pvc)">
      <rect width="184.6" height="103.7" fill="url(#pv0)"/>
      <circle cx="92.3" cy="181.2" r="126.4" fill="none" stroke="url(#pv2)" stroke-width="5" filter="url(#blr)"/>
      <circle cx="92.3" cy="181.2" r="125.4" fill="url(#pv1)"/>
            <circle cx="92.3" cy="181.2" r="125.6" fill="none" stroke="url(#pv2)" stroke-width="2.2" filter="url(#blr2)"/>
      <circle cx="92.3" cy="181.2" r="125.5" fill="none" stroke="url(#pv3)" stroke-width="1" filter="url(#blr2)"/>
      <rect y="66" width="184.6" height="37.7" fill="url(#pv5)"/><rect y="50" width="70" height="53.7" fill="url(#pv6)"/><rect x="114.6" y="50" width="70" height="53.7" fill="url(#pv7)"/>
      <text x="92.5" y="19.4" text-anchor="middle" textLength="121.5" lengthAdjust="spacingAndGlyphs" font-family="Liberation Sans, sans-serif" font-size="10.4" fill="#d9dee2">Innovating Space Solutions</text>
      <text x="92.3" y="32.1" text-anchor="middle" textLength="100" lengthAdjust="spacingAndGlyphs" font-family="Liberation Sans, sans-serif" font-size="10.4" fill="#d9dee2">for a Better Tomorrow</text>
      <circle cx="83" cy="94" r="3.2" fill="#fff"/><circle cx="85.3" cy="91.6" r=".9" fill="#0a0f16"/>
      <text x="88.6" y="93.4" textLength="15.8" lengthAdjust="spacingAndGlyphs" font-family="Liberation Sans, sans-serif" font-weight="700" font-size="3.2" fill="#e8ecf0">Showspace</text>
      <text x="88.6" y="96.6" textLength="7.5" lengthAdjust="spacingAndGlyphs" font-family="Liberation Sans, sans-serif" font-size="2.4" fill="#7d8690">Studios</text>
      </g>
    </svg>
  </div>
  <div class="abs" style="left:1087.6px;top:147.7px;width:17px;height:17px;border-radius:4px;background:#2b9cf5"></div>
  <svg class="abs" style="left:1091px;top:151px" width="10" height="10" viewBox="0 0 10 10" stroke="#fff" stroke-width="1.15" stroke-linecap="round"><path d="M1.2 1.5 H8.8 M1.2 4 H8.8 M1.2 6.5 H8.8 M1.2 9 H5.4"/></svg>
  <div class="t doc" style="left:1113.0px;top:147px;font-size:13px;line-height:18px;color:#777;letter-spacing:0.83px">Document</div>
  <div class="t tt1" style="left:1087.4px;top:167px;font-size:21.5px;line-height:31px;color:#222;letter-spacing:-0.07px">Showspace</div>
  <div class="t tt2" style="left:1086.4px;top:198px;font-size:21.5px;line-height:31px;color:#222;letter-spacing:0.26px">Introduction.pptx</div>
  <div class="t lu" style="left:1087.0px;top:260px;font-size:13px;line-height:18px;color:#777;letter-spacing:0.91px">Last updated 5 Mar 2026 09:53</div>

  <!-- tabs -->
  <div class="abs" style="left:880px;top:355px;width:504px;height:1px;background:#e2e2e8"></div>
  <div class="abs" style="left:1192px;top:354px;width:159px;height:2px;background:#5a5ab8"></div>
  <div class="tab" style="left:897px;letter-spacing:-0.02px">Details</div>
  <div class="tab" style="left:982px;letter-spacing:-0.2px">Feedback</div>
  <div class="tab" style="left:1088px;letter-spacing:0.02px">Localization</div>
  <div class="abs" style="left:1204px;top:319px;width:86px;height:33px;border:4px solid #f0b24e;border-radius:3px;background:#fff"></div>
  <div class="tab" style="left:1210.5px;top:325px;color:#222;font-weight:400;-webkit-text-stroke:.45px #222;font-size:15.5px;transform:scaleX(1.07);transform-origin:0 0;letter-spacing:0.1px">Audit Log</div>

  <!-- audit entry -->
  <div class="abs" style="left:897px;top:391px;width:35px;height:35px;border-radius:50%;background:#a6efbf;color:#145a32;font-size:15px;line-height:35px;text-align:center;letter-spacing:.2px">TA</div>
  <div class="abs" style="left:943px;top:386px;width:426px;height:258px;border:6px solid #f0b24e;border-radius:3px;background:#f3f3fc"></div>
  <div class="t ta" style="transform:scaleX(1.07);transform-origin:0 0;left:963.2px;top:409px;font-size:15.5px;font-weight:400;-webkit-text-stroke:.45px #222;color:#222;letter-spacing:0.21px">Test Admin</div>
  <div class="t dt" style="left:1200px;width:154px;text-align:right;top:410px;font-size:13px;line-height:18px;color:#999;letter-spacing:1.01px">5 Mar 2026 09:53</div>
  <div class="dot" style="top:452px"></div>
  <div class="tag" style="left:993px;width:85px;letter-spacing:0.05px">Company</div>
  <div class="tag" style="left:1082px;width:101px;letter-spacing:0.41px">global-ENG</div>
  <div class="lr l1" style="left:989px;top:445px;letter-spacing:0.03px">Added the following tags:</div>
  <div class="lr l2a" style="left:989px;top:509px;letter-spacing:0.07px">Added description</div>
  <div class="lb l2b" style="left:1124.7px;top:509px;letter-spacing:0.15px">"This is the Showspace intro</div>
  <div class="lb l2c" style="left:989px;top:531px;letter-spacing:0.28px">deck."</div>
  <div class="lr l3a" style="left:989.0px;top:562px;letter-spacing:-0.05px">Updated name from</div>
  <div class="lb l3b" style="left:1136.2px;top:562px;letter-spacing:0.1px">"Showspace</div>
  <div class="lb l3c" style="left:989px;top:583px;letter-spacing:0.6px">introduction.pptx"</div>
  <div class="lr l3d" style="left:1132px;top:583px;letter-spacing:0.2px">to</div>
  <div class="lb l3e" style="left:1151.0px;top:583px;letter-spacing:0.09px">"Showspace</div>
  <div class="lb l3f" style="left:988.9px;top:605px;letter-spacing:0.55px">Introduction.pptx"</div>
  <div class="dot" style="top:517px"></div>
  <div class="dot" style="top:570px"></div>
</div>


</div>
</body></html>
